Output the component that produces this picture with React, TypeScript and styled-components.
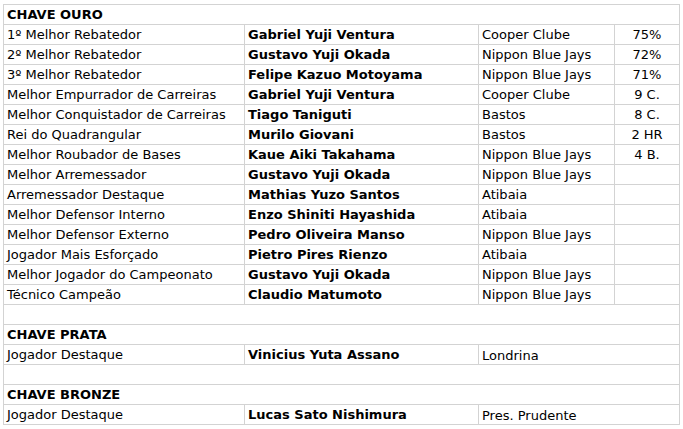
import React from "react";
import styled, { createGlobalStyle } from "styled-components";

const GlobalStyle = createGlobalStyle`
  html, body {
    margin: 0;
    padding: 0;
    background: #ffffff;
  }
  body {
    font-family: "DejaVu Sans", Verdana, sans-serif;
    color: #000;
  }
`;

const Page = styled.div`
  padding: 4px 0 0 3px;
`;

const Table = styled.table`
  border-collapse: collapse;
  width: 676px;
  table-layout: fixed;
  font-size: 13px;
`;

const Cell = styled.td<{ $bold?: boolean; $center?: boolean; $low?: boolean }>`
  border: 1px solid #d3d3d3;
  padding: ${(p) => (p.$low ? "3px 3px 0 3px" : "0 3px")};
  font-weight: ${(p) => (p.$bold ? 700 : 400)};
  text-align: ${(p) => (p.$center ? "center" : "left")};
  white-space: nowrap;
  overflow: hidden;
  vertical-align: middle;
  line-height: ${(p) => (p.$low ? "16px" : "19px")};
`;

const HeadCell = styled(Cell).attrs({ colSpan: 4 })`
  font-weight: 700;
`;

type Award = { title: string; name: string; team: string; stat?: string };

const ouro: Award[] = [
  { title: "1º Melhor Rebatedor", name: "Gabriel Yuji Ventura", team: "Cooper Clube", stat: "75%" },
  { title: "2º Melhor Rebatedor", name: "Gustavo Yuji Okada", team: "Nippon Blue Jays", stat: "72%" },
  { title: "3º Melhor Rebatedor", name: "Felipe Kazuo Motoyama", team: "Nippon Blue Jays", stat: "71%" },
  { title: "Melhor Empurrador de Carreiras", name: "Gabriel Yuji Ventura", team: "Cooper Clube", stat: "9 C." },
  { title: "Melhor Conquistador de Carreiras", name: "Tiago Taniguti", team: "Bastos", stat: "8 C." },
  { title: "Rei do Quadrangular", name: "Murilo Giovani", team: "Bastos", stat: "2 HR" },
  { title: "Melhor Roubador de Bases", name: "Kaue Aiki Takahama", team: "Nippon Blue Jays", stat: "4 B." },
  { title: "Melhor Arremessador", name: "Gustavo Yuji Okada", team: "Nippon Blue Jays" },
  { title: "Arremessador Destaque", name: "Mathias Yuzo Santos", team: "Atibaia" },
  { title: "Melhor Defensor Interno", name: "Enzo Shiniti Hayashida", team: "Atibaia" },
  { title: "Melhor Defensor Externo", name: "Pedro Oliveira Manso", team: "Nippon Blue Jays" },
  { title: "Jogador Mais Esforçado", name: "Pietro Pires Rienzo", team: "Atibaia" },
  { title: "Melhor Jogador do Campeonato", name: "Gustavo Yuji Okada", team: "Nippon Blue Jays" },
  { title: "Técnico Campeão", name: "Claudio Matumoto", team: "Nippon Blue Jays" },
];

function AwardRow({ a }: { a: Award }) {
  return (
    <tr>
      <Cell>{a.title}</Cell>
      <Cell $bold>{a.name}</Cell>
      <Cell>{a.team}</Cell>
      <Cell $center>{a.stat ?? "\u00a0"}</Cell>
    </tr>
  );
}

function SingleRow({ a }: { a: Award }) {
  return (
    <tr>
      <Cell>{a.title}</Cell>
      <Cell $bold>{a.name}</Cell>
      <Cell $low colSpan={2}>{a.team}</Cell>
    </tr>
  );
}

function Spacer() {
  return (
    <tr>
      <HeadCell>{"\u00a0"}</HeadCell>
    </tr>
  );
}

export default function App() {
  return (
    <>
      <GlobalStyle />
      <Page>
        <Table>
          <colgroup>
            <col style={{ width: 241 }} />
            <col style={{ width: 234 }} />
            <col style={{ width: 136 }} />
            <col style={{ width: 65 }} />
          </colgroup>
          <tbody>
            <tr>
              <HeadCell>CHAVE OURO</HeadCell>
            </tr>
            {ouro.map((a, i) => (
              <AwardRow key={i} a={a} />
            ))}
            <Spacer />
            <tr>
              <HeadCell>CHAVE PRATA</HeadCell>
            </tr>
            <SingleRow a={{ title: "Jogador Destaque", name: "Vinicius Yuta Assano", team: "Londrina" }} />
            <Spacer />
            <tr>
              <HeadCell>CHAVE BRONZE</HeadCell>
            </tr>
            <SingleRow a={{ title: "Jogador Destaque", name: "Lucas Sato Nishimura", team: "Pres. Prudente" }} />
          </tbody>
        </Table>
      </Page>
    </>
  );
}
